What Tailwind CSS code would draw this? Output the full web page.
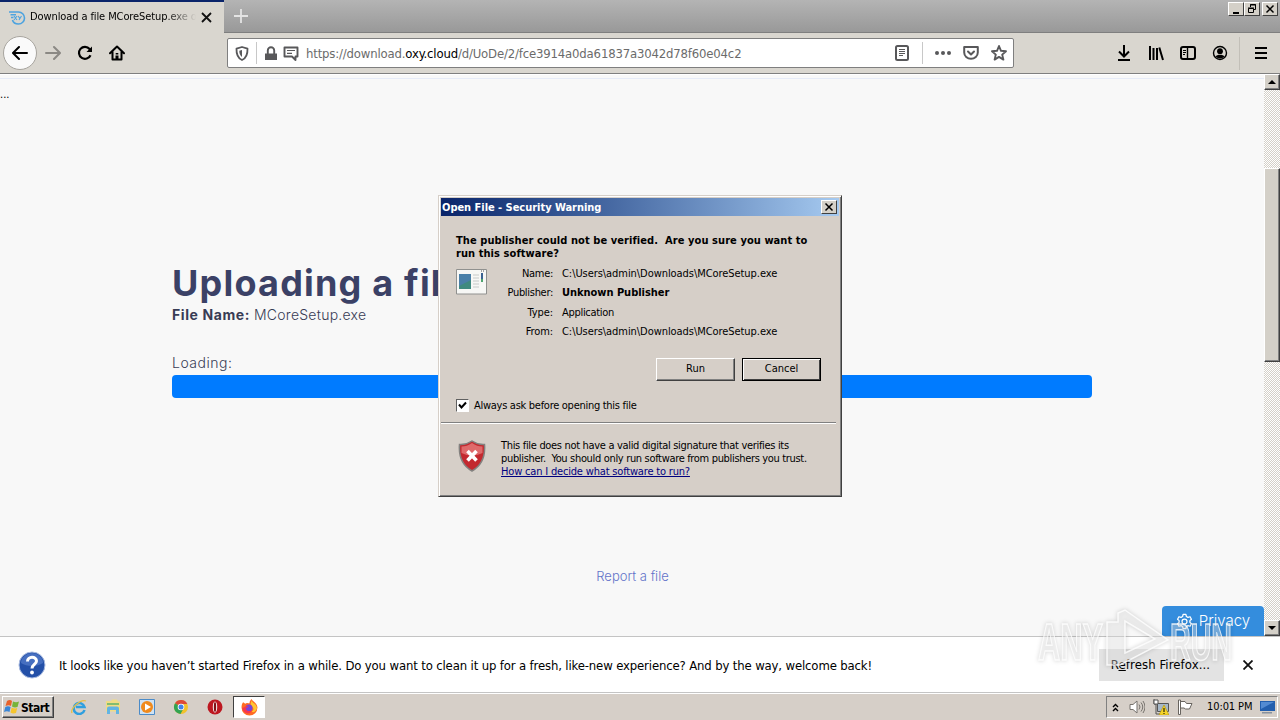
<!DOCTYPE html>
<html lang="en">
<head>
    <meta charset="UTF-8">
    <meta name="viewport" content="width=device-width, initial-scale=1.0">
    <title>Download a file MCoreSetup.exe</title>
    <script src="https://cdn.jsdelivr.net/npm/@tailwindcss/browser@4"></script>
</head>
<body class="relative flex h-[720px] w-[1280px] flex-col overflow-hidden bg-[#d6cfc8] font-['DejaVu_Sans_Condensed','DejaVu_Sans',sans-serif] text-[11px] text-black">

    <!-- Tab strip -->
    <header class="flex h-[33px] shrink-0 bg-linear-to-b from-[#b4b4b4] to-[#989898]">
        <div class="flex w-[224px] items-center border-t-2 border-[#0a246a] bg-[#d9d6cf] pl-2">
            <svg class="mr-1 h-4 w-[18px] shrink-0" viewBox="0 0 18 16" fill="none" stroke="#4da3df" stroke-width="1.6">
                <path d="M1 2h9.500a5.800 5.800 0 0 1 0 12C7 14 5 12 4.500 10M2.500 4.800H8M3 7.500h2.500"/>
                <path d="M6 6l3 4M9 6l-3 4M10 6l1.700 2.200M13.500 6l-2.500 4" stroke-width="1.100"/>
            </svg>
            <span id="tabTitle" class="w-[166px] overflow-hidden whitespace-nowrap bg-linear-to-r from-black from-82% to-transparent bg-clip-text tracking-[-0.1px] text-transparent">Download a file MCoreSetup.exe on</span>
            <svg class="ml-[5px] h-[11px] w-[11px] shrink-0" viewBox="0 0 11 11" stroke="#111" stroke-width="1.800"><path d="M1 1l9 9M10 1l-9 9"/></svg>
        </div>
        <div class="flex flex-1 border-b border-[#7f7f7f]">
            <svg class="mt-[9px] ml-[10px] h-[14px] w-[14px]" viewBox="0 0 14 14" stroke="#e4e4e4" stroke-width="1.800"><path d="M7 0v14M0 7h14"/></svg>
            <div class="mt-[2px] mr-[2px] ml-auto flex h-[14px]">
                <div class="h-[14px] w-4 border border-t-white border-r-[#404040] border-b-[#404040] border-l-white bg-[#d4d0c8]"><svg viewBox="0 0 14 12"><path d="M4 9h6v2H4z"/></svg></div>
                <div class="h-[14px] w-4 border border-t-white border-r-[#404040] border-b-[#404040] border-l-white bg-[#d4d0c8]"><svg viewBox="0 0 14 12" fill="none" stroke="#000"><path d="M5.500 4V1.500h5v5H9M5 2h6M3.500 5.500h5v4h-5zM3 5h6"/></svg></div>
                <div class="ml-[2px] h-[14px] w-4 border border-t-white border-r-[#404040] border-b-[#404040] border-l-white bg-[#d4d0c8]"><svg viewBox="0 0 14 12" stroke="#000" stroke-width="1.500"><path d="M3.500 2.500l7 7M10.500 2.500l-7 7"/></svg></div>
            </div>
        </div>
    </header>

    <!-- Navigation toolbar -->
    <nav class="flex h-[41px] shrink-0 items-center border-b border-[#7f7f7f] bg-[#d9d6cf]">
        <div class="ml-[3px] flex h-[34px] w-[34px] items-center justify-center rounded-full border border-[#a7a49e] bg-[#fafafa]">
            <svg class="h-4 w-4" viewBox="0 0 16 16" fill="none" stroke="#000" stroke-width="2" stroke-linecap="round" stroke-linejoin="round"><path d="M15 8H1.500M7 2L1 8l6 6"/></svg>
        </div>
        <svg class="ml-2 h-4 w-4" viewBox="0 0 16 16" fill="none" stroke="#8b8984" stroke-width="2" stroke-linecap="round" stroke-linejoin="round"><path d="M1 8h13.500M9 2l6 6-6 6"/></svg>
        <svg class="ml-4 h-4 w-4" viewBox="0 0 16 16" fill="none" stroke="#000" stroke-width="2.200"><path d="M13.500 10.200A6 6 0 1 1 12.600 4L14 6"/><path d="M9.500 7H15V1.500z" fill="#000" stroke="none"/></svg>
        <svg class="ml-4 h-4 w-4" viewBox="0 0 16 16"><path d="M1 8.300L8 1.500l7 6.800M3.500 7v7.500h9V7" fill="none" stroke="#000" stroke-width="2" stroke-linecap="round" stroke-linejoin="round"/><path d="M6.700 8h2.600v1.500H6.700zM6.500 10.500h3V15h-3z"/></svg>

        <div class="ml-[102px] flex h-[30px] w-[787px] items-center rounded-xs border border-[#7f7f7f] bg-white text-[#58585a]">
            <svg class="ml-[7px] h-[15px] w-[14px]" viewBox="0 0 14 15"><path d="M7 1L12.500 2.700C12.700 8 11.500 12 7 14 2.500 12 1.300 8 1.500 2.700z" fill="none" stroke="currentColor" stroke-width="1.800" stroke-linejoin="round"/><path d="M7 4v7C5 9.500 4.300 7.500 4.300 4.800z" fill="currentColor"/></svg>
            <div class="mr-2 ml-[7px] h-[22px] w-px bg-[#c8c8c8]"></div>
            <svg class="h-[15px] w-[12px]" viewBox="0 0 12 15"><path d="M0 7.500h12V14H0z" fill="currentColor"/><path d="M2.800 8V4.500a3.200 3.200 0 0 1 6.400 0V8" fill="none" stroke="currentColor" stroke-width="1.900"/></svg>
            <svg class="ml-[6px] h-[15px] w-4" viewBox="0 0 16 15"><path d="M1.500 1.500h13v9h-2V14L9 10.500H1.500z" fill="none" stroke="currentColor" stroke-width="1.900" stroke-linejoin="round"/><path d="M4 4.500h8M4 7.300h5" stroke="currentColor" stroke-width="1.200"/></svg>
            <span class="mt-[2px] ml-[7px] whitespace-nowrap text-[13px] tracking-[-0.17px] text-[#6b6b6b]">https://download.<span class="text-black">oxy.cloud</span>/d/UoDe/2/fce3914a0da61837a3042d78f60e04c2</span>
            <svg class="ml-auto h-4 w-[14px]" viewBox="0 0 14 16" fill="none" stroke="currentColor"><rect x="1" y="1" width="12" height="14" rx="1.500" stroke-width="2"/><path d="M4 4.500h6M4 6.500h6M4 8.500h6M4 10.500h4"/></svg>
            <div class="mr-3 ml-[13px] h-[22px] w-px bg-[#c8c8c8]"></div>
            <svg class="h-4 w-4" viewBox="0 0 16 16" fill="currentColor"><circle cx="2" cy="8" r="2"/><circle cx="8" cy="8" r="2"/><circle cx="14" cy="8" r="2"/></svg>
            <svg class="ml-3 h-4 w-4" viewBox="0 0 16 16" fill="none" stroke="currentColor" stroke-width="2" stroke-linejoin="round" stroke-linecap="round"><path d="M1.200 2h13.600v5.500a6.800 6.300 0 0 1-13.600 0zM5 6.500l3 3 3-3"/></svg>
            <svg class="mr-[6px] ml-3 h-4 w-4" viewBox="0 0 16 16" fill="none" stroke="currentColor" stroke-width="1.900" stroke-linejoin="round"><path d="M8 1l2 4.800 5 .400-3.800 3.400 1.200 5L8 11.900l-4.400 2.700 1.200-5L1 6.200l5-.400z"/></svg>
        </div>

        <div class="ml-[102px] flex items-center gap-4">
            <svg class="h-4 w-4" viewBox="0 0 16 16" fill="none" stroke="#000" stroke-width="2"><path d="M8 0v11M3 6.500l5 5 5-5M2 15h12"/></svg>
            <svg class="h-4 w-4" viewBox="0 0 16 16" stroke="#000" stroke-width="2"><path d="M2 1v14M5.500 3v12M9 3v12M11.300 2.500L15 15"/></svg>
            <svg class="h-4 w-4" viewBox="0 0 16 16" fill="none" stroke="#000"><rect x="1" y="2" width="14" height="12" rx="2" stroke-width="2"/><path d="M7.500 2v12" stroke-width="1.400"/><path d="M3 5.500h3M3 7.500h3M3 9.500h2"/></svg>
            <svg class="h-4 w-4" viewBox="0 0 16 16"><circle cx="8" cy="8" r="6.500" fill="none" stroke="#000" stroke-width="1.400"/><circle cx="8" cy="6.200" r="2.900"/><path d="M3.500 11.500C5 9.300 11 9.300 12.500 11.500 10 14 6 14 3.500 11.500z"/></svg>
        </div>
        <div class="mr-[14px] ml-[11px] h-[33px] w-px bg-[#c2bfb8]"></div>
        <svg class="h-4 w-[14px]" viewBox="0 0 14 16" stroke="#000" stroke-width="2"><path d="M1 3h12M1 8h12M1 13h12"/></svg>
    </nav>

    <!-- Page -->
    <div class="flex h-[562px] shrink-0">
        <main class="relative flex-1 border-t border-white bg-[#f8f8f8] font-[Inter,sans-serif] text-[#383c55]">
            <div class="mt-[3px] h-px bg-[#e6ebf7]"></div>
            <div class="h-[14px] w-6 pt-2 font-['DejaVu_Sans_Condensed',sans-serif] text-[11px] text-black">...</div>
            <div class="mx-[172px] mt-[168px]">
                <h1 class="text-[36px] leading-[44px] font-bold tracking-[1.2px] whitespace-nowrap text-[#3b4166]">Uploading a file</h1>
                <p class="text-[14px] leading-[20px]"><b class="tracking-[0.6px]">File Name:</b> <span class="font-light tracking-[0.25px]">MCoreSetup.exe</span></p>
                <p class="mt-[28px] text-[14px] leading-[20px] font-light tracking-[0.5px]">Loading:</p>
                <div class="mt-[2px] h-[23px] rounded bg-[#007bff]"></div>
            </div>
            <a href="#" class="mt-[170px] block pl-[1px] text-center text-[13px] leading-4 font-light text-[#6273c9]">Report a file</a>
            <button class="absolute right-0 bottom-0 flex h-[30px] w-[102px] items-center justify-center gap-[6px] rounded-t bg-[#348ddd] text-[15px] text-white">
                <svg class="h-[17px] w-[17px]" viewBox="0 0 24 24" fill="none" stroke="currentColor" stroke-width="1.800" stroke-linejoin="round"><circle cx="12" cy="12" r="3.500"/><path d="M10 2h4l.7 3 2.200 1.200 2.900-.900 2 3.500-2.200 2v2.400l2.200 2-2 3.500-2.900-.900-2.200 1.200L14 22h-4l-.7-3-2.200-1.200-2.900.900-2-3.500 2.200-2v-2.400l-2.200-2 2-3.500 2.900.900L9.300 5z"/></svg>
                <span class="font-light">Privacy</span>
            </button>
        </main>
        <aside class="flex w-4 flex-col bg-[repeating-conic-gradient(#d4d0c8_0_25%,#fff_0_50%)] bg-size-[2px_2px]">
            <div class="h-4 border border-t-white border-r-[#404040] border-b-[#404040] border-l-white bg-[#d4d0c8] shadow-[inset_-1px_-1px_#808080]"><svg viewBox="0 0 14 14"><path d="M3 9l4-4 4 4z"/></svg></div>
            <div class="mt-[78px] h-[194px] border border-t-white border-r-[#404040] border-b-[#404040] border-l-white bg-[#d4d0c8] shadow-[inset_-1px_-1px_#808080]"></div>
            <div class="mt-auto h-4 border border-t-white border-r-[#404040] border-b-[#404040] border-l-white bg-[#d4d0c8] shadow-[inset_-1px_-1px_#808080]"><svg viewBox="0 0 14 14"><path d="M3 5l4 4 4-4z"/></svg></div>
        </aside>
    </div>

    <!-- Notification bar -->
    <section class="flex h-[57px] shrink-0 items-center border-y border-[#c4c4c4] bg-white text-[13px]">
        <svg class="ml-[18px] h-7 w-7" viewBox="0 0 28 28"><circle cx="14" cy="14" r="13" fill="#2450a8" stroke="#a9bbe0"/><path d="M3 12a11 10 0 0 1 22 0c-6 4-16 4-22 0z" fill="#466fc0"/><path d="M9.500 10.500C9.500 5 18.500 5 18.500 10c0 3.500-4.500 3.500-4.500 7.500" fill="none" stroke="#fff" stroke-width="3"/><circle cx="14" cy="21.500" r="1.900" fill="#fff"/></svg>
        <p class="mt-[2px] ml-[13px] whitespace-nowrap tracking-[-0.143px]">It looks like you haven’t started Firefox in a while. Do you want to clean it up for a fresh, like-new experience? And by the way, welcome back!</p>
        <button class="ml-auto h-8 w-[125px] bg-[#e3e3e3] pr-[2px] tracking-[0.1px]">R<u>e</u>fresh Firefox...</button>
        <svg class="mr-[27px] ml-[19px] h-[10px] w-[10px]" viewBox="0 0 10 10" stroke="#111" stroke-width="1.800"><path d="M.5.500l9 9M9.500.500l-9 9"/></svg>
    </section>

    <!-- Taskbar -->
    <footer class="flex h-[27px] shrink-0 items-center border-t border-white bg-[#d6cfc8]">
        <button class="ml-[2px] flex h-[22px] w-[52px] items-center border border-t-white border-r-[#404040] border-b-[#404040] border-l-white pl-[1px] font-bold shadow-[inset_-1px_-1px_#808080]">
            <svg class="mr-[1px] h-4 w-4 shrink-0" viewBox="0 0 16 16"><path d="M3 2q3-2 5 0L7 7Q5 5.500 1.500 7z" fill="#e8622a"/><path d="M9 2.500q3 1.500 6 0L13.500 8q-3 1-5.500-.500z" fill="#76b43a"/><path d="M1.300 8Q4 6.500 6.600 8L5.500 13Q3 11.500 0 13z" fill="#3a86d6"/><path d="M7.700 8.500q3 1.500 5.500.500L12 14q-3 1.200-5.500-.500z" fill="#f5c52e"/></svg>
            <span class="mt-px text-[12px] tracking-[-0.5px]">Start</span>
        </button>
        <div class="ml-[17px] flex items-center gap-[18px]">
            <svg class="h-4 w-4" viewBox="0 0 16 16" fill="none"><path d="M13.500 11A5.500 5.500 0 1 1 13.500 8H5" stroke="#2f9fdf" stroke-width="2.500"/><path d="M1 14C-1 10 9 0 15 2" stroke="#e7bf45" stroke-width="1.300"/></svg>
            <svg class="h-4 w-4" viewBox="0 0 16 16"><path d="M1 2h5l1-1.500h5l1 2h2v10H1z" fill="#f0dc86"/><path d="M2 4h12v2H2z" fill="#83bd6f"/><path d="M2 15V9.500q0-2 2-2h8q2 0 2 2V15h-3v-4H5v4z" fill="#62b4e3"/></svg>
            <svg class="h-4 w-4" viewBox="0 0 16 16"><path d="M.5.500h15v15H.500z" fill="#cfe2f3" stroke="#4b8bc8"/><circle cx="8" cy="8" r="6" fill="#f08a1d"/><path d="M6 4.500l6 3.500-6 3.500z" fill="#fff"/></svg>
            <svg class="h-4 w-4" viewBox="0 0 16 16"><circle cx="8" cy="8" r="7" fill="#f2c22c"/><path d="M8 8L2 4.300a7 7 0 0 1 12.300.700H8z" fill="#dd4a39"/><path d="M8 8L2 4.300A7 7 0 0 0 7.500 15l3-5.500z" fill="#33a352"/><circle cx="8" cy="8" r="3.300" fill="#fff"/><circle cx="8" cy="8" r="2.500" fill="#4283e8"/></svg>
            <svg class="h-4 w-4" viewBox="0 0 16 16"><circle cx="8" cy="8" r="7.500" fill="#bd1720"/><ellipse cx="8" cy="8" rx="2.200" ry="5.500" fill="#fff"/><ellipse cx="8" cy="8" rx="1.200" ry="5" fill="#801014"/></svg>
        </div>
        <div class="ml-[10px] flex h-[22px] w-8 items-center justify-center border border-t-[#404040] border-r-white border-b-white border-l-[#404040] bg-white">
            <svg class="h-[17px] w-[17px]" viewBox="0 0 16 16"><path d="M2 3l2 1.500C5 3 7 4 8 4c0-2 1-3 2-4 0 2 5 3 5.500 8A7.500 7.500 0 1 1 .5 8C.500 6 1 4 2 3z" fill="#ff6a24"/><path d="M10 1c0 3 5 3 5 8-1 3-3 4-5 3 4-3 0-5-1-7z" fill="#ffc531"/><circle cx="7.500" cy="8.500" r="3.300" fill="#7645d9"/><path d="M1 8c2 1 3-2 6-1-1 1-2 1-2.500 2 1 3 4 3 6 1-1 5-8 5-9.500-2z" fill="#f5364f"/></svg>
        </div>
        <div class="mr-[2px] ml-auto flex h-[22px] w-[172px] items-center border border-t-[#808080] border-r-white border-b-white border-l-[#808080]">
            <svg class="ml-[5px] h-[9px] w-[7px]" viewBox="0 0 7 9" fill="none" stroke="#000" stroke-width="1.400"><path d="M1 4l2.500-2.500L6 4M1 8l2.500-2.500L6 8"/></svg>
            <svg class="ml-[10px] h-4 w-4" viewBox="0 0 16 16" fill="none" stroke="#77736e"><path d="M1 5.500h3L8 2v12l-4-3.500H1z" fill="#fff"/><path d="M10 5.500q2 2.500 0 5M12 3.500q3.500 4.500 0 9M14 2q4 6 0 12"/></svg>
            <svg class="ml-2 h-4 w-4" viewBox="0 0 16 16"><path d="M4.500 4.500h11v8h-11z" fill="#a7b8c8" stroke="#555"/><path d="M1 0v5h2v10h8" fill="none" stroke="#555"/><path d="M1 1h4v4H1z" fill="#fff" stroke="#555"/><path d="M11 6l5 10H6z" fill="#f6d52a" stroke="#b39000" stroke-width=".6"/><path d="M10.500 9h1v4h-1zM10.500 14h1v1h-1z"/></svg>
            <svg class="ml-2 h-4 w-4" viewBox="0 0 16 16" fill="#fff" stroke="#68645f"><path d="M1.500 1v14.500h2V1zM3.500 2.500H8l1.500 2H15L12.500 10H8.500L7 9H3.500z"/></svg>
            <time class="mt-px ml-[14px] whitespace-nowrap tracking-[-0.1px]">10:01 PM</time>
            <svg class="ml-2 h-[13px] w-4 shrink-0" viewBox="0 0 16 13"><path d="M0 0h15v10H0z" fill="#235fae"/><path d="M1 1h13L1 8z" fill="#538bd2"/><path d="M2 11h10v1.500H2z" fill="#87919e"/></svg>
        </div>
    </footer>

    <!-- Security warning window -->
    <div role="dialog" class="absolute top-[195px] left-[438px] flex h-[302px] w-[404px] flex-col border border-t-[#d6cfc8] border-r-[#404040] border-b-[#404040] border-l-[#d6cfc8] bg-[#d6cfc8] p-[2px] shadow-[inset_1px_1px_#fff,inset_-1px_-1px_#808080]">
        <div class="flex h-[18px] shrink-0 items-center bg-linear-to-r from-[#0a246a] to-[#a6caf0] pr-[2px] pl-[1px] font-bold text-white">
            <span id="dialogTitle" class="mt-[2px] tracking-[-0.03px]">Open File - Security Warning</span>
            <div class="ml-auto h-[14px] w-4 border border-t-white border-r-[#404040] border-b-[#404040] border-l-white bg-[#d4d0c8]"><svg viewBox="0 0 14 12" stroke="#000" stroke-width="1.500"><path d="M3.500 2.500l7 7M10.500 2.500l-7 7"/></svg></div>
        </div>
        <p class="mt-[18px] pl-[15px] leading-[13px] font-bold tracking-[0.07px] whitespace-pre">The publisher could not be verified.  Are you sure you want to
run this software?</p>
        <div class="mt-[4px] flex pl-[15px]">
            <svg class="mt-[4px] h-[28px] w-[31px]" viewBox="0 0 31 28"><path d="M.5 1.500h30V26H.500z" fill="#f7f7f5" stroke="#90918f"/><path d="M25 3h1M27 3h1" stroke="#555"/><path d="M3 6h12v15H3z" fill="#3f8a7f"/><path d="M3 6h12v6l-12 6z" fill="#4a7fa8"/><path d="M17 7h6M17 10h6M17 13h6M17 16h6M17 19h6" stroke="#c7cac9"/><path d="M25 5h2v9h-2z" fill="#3b6291"/><path d="M25 11h2v3h-2z" fill="#4ea36f"/></svg>
            <dl class="ml-[14px] grid grid-cols-[52px_1fr] gap-x-[9px] leading-[19.4px] whitespace-nowrap">
                <dt class="text-right tracking-[-0.3px]">Name:</dt><dd class="tracking-[-0.06px]">C:\Users\admin\Downloads\MCoreSetup.exe</dd>
                <dt class="text-right tracking-[-0.3px]">Publisher:</dt><dd class="font-bold tracking-[-0.03px]">Unknown Publisher</dd>
                <dt class="text-right tracking-[-0.1px]">Type:</dt><dd class="tracking-[-0.3px]">Application</dd>
                <dt class="text-right tracking-[-0.1px]">From:</dt><dd class="tracking-[-0.06px]">C:\Users\admin\Downloads\MCoreSetup.exe</dd>
            </dl>
        </div>
        <div class="mt-[16px] mr-[18px] flex justify-end gap-[7px]">
            <button class="h-[23px] w-[79px] border border-t-white border-r-[#404040] border-b-[#404040] border-l-white shadow-[inset_-1px_-1px_#808080]">Run</button>
            <button class="h-[23px] w-[79px] border border-black shadow-[inset_1px_1px_#fff,inset_-1px_-1px_#404040]">Cancel</button>
        </div>
        <label class="mt-[16px] flex items-center pl-[15px]">
            <span class="h-[13px] w-[13px] border border-t-[#606060] border-r-white border-b-white border-l-[#606060] bg-white"><svg viewBox="0 0 11 11" fill="none" stroke="#000" stroke-width="2"><path d="M2 4.500L4.500 7.500 9 2.500"/></svg></span>
            <span class="mt-px ml-[5px] tracking-[-0.28px]">Always ask before opening this file</span>
        </label>
        <hr class="mt-auto mr-[3px] h-[2px] border-t border-b border-t-[#808080] border-b-white">
        <div class="flex h-[70px] shrink-0 pt-[15px] pl-[17px]">
            <svg class="mt-px h-8 w-[28px]" viewBox="0 0 28 32"><path d="M14 1q6 4 12.500 3.500Q28 23 14 31 0 23 1.500 4.500 8 5 14 1z" fill="#c3292f" stroke="#83817f" stroke-width="1.500"/><path d="M14 3q5 3.500 10.500 3.500L24.500 13Q14 18 3.500 13V6.500Q9 6.500 14 3z" fill="#df6a6b"/><path d="M9.500 11l9 9.500M18.500 11l-9 9.500" stroke="#fff" stroke-width="3.600"/></svg>
            <p class="ml-[15px] leading-[13px] tracking-[-0.33px] whitespace-pre"><span class="tracking-[-0.32px]">This file does not have a valid digital signature that verifies its</span>
publisher.  You should only run software from publishers you trust.
<a href="#" class="tracking-[-0.18px] text-[#00007f] underline">How can I decide what software to run?</a></p>
        </div>
    </div>

    <!-- ANY.RUN watermark -->
    <svg class="pointer-events-none absolute top-[604px] left-[1034px] h-[66px] w-[204px] drop-shadow-[0_0_2px_rgba(0,0,0,0.28)]" viewBox="0 0 204 66" fill="#ffffff55" stroke="#ffffffcc" stroke-width="1.500" font-family="Liberation Sans, sans-serif" font-weight="bold" font-size="52">
        <text x="4" y="56" textLength="65" lengthAdjust="spacingAndGlyphs">ANY</text>
        <path d="M73 18h11V9l7-3 43 30-48 25H73zM91 17v32l30-14z"/>
        <text x="136" y="56" textLength="62" lengthAdjust="spacingAndGlyphs">RUN</text>
    </svg>
</body>
</html>
